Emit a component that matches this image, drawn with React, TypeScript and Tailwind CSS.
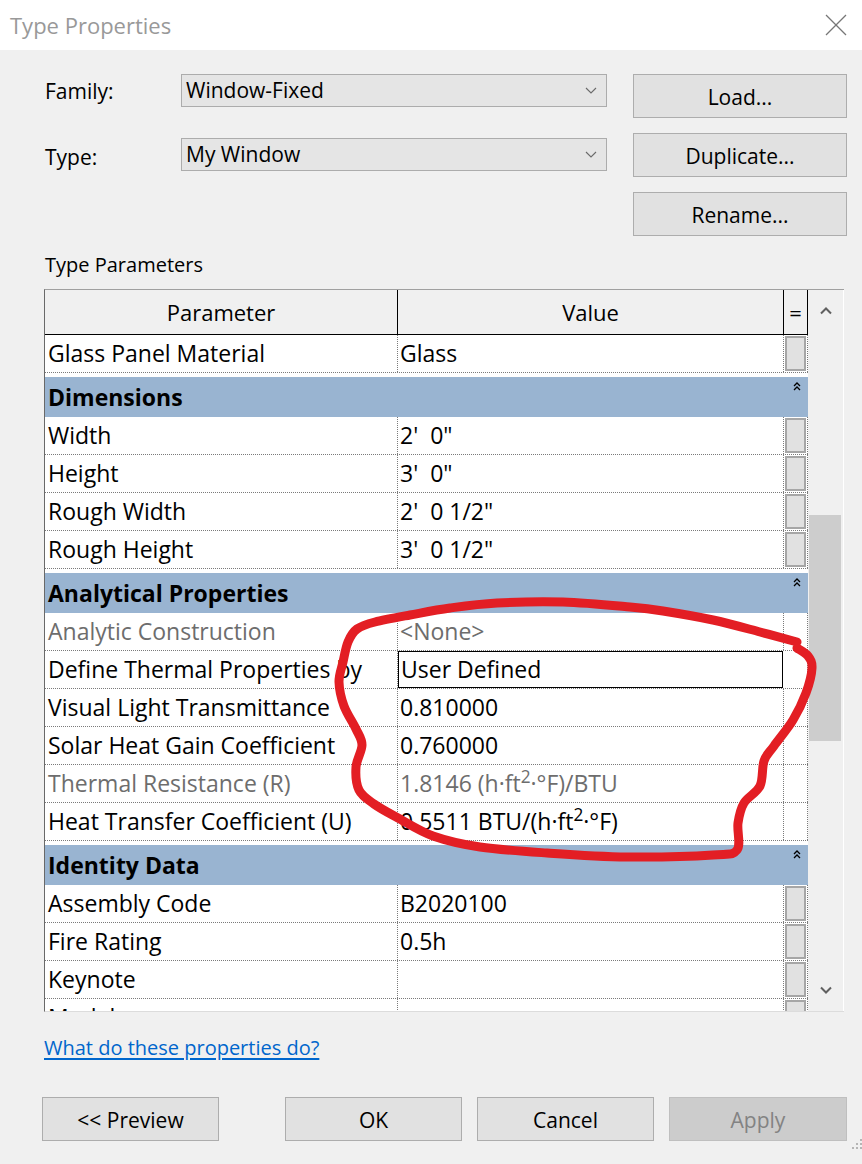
import type { ReactNode } from 'react';

type Row =
  | { kind: 'section'; name: string }
  | { kind: 'row'; name: string; value?: ReactNode; gray?: boolean; btn?: boolean; boxed?: boolean };

const ROWS: Row[] = [
  { kind: 'row', name: 'Glass Panel Material', value: 'Glass', btn: true },
  { kind: 'section', name: 'Dimensions' },
  { kind: 'row', name: 'Width', value: `2'  0"`, btn: true },
  { kind: 'row', name: 'Height', value: `3'  0"`, btn: true },
  { kind: 'row', name: 'Rough Width', value: `2'  0 1/2"`, btn: true },
  { kind: 'row', name: 'Rough Height', value: `3'  0 1/2"`, btn: true },
  { kind: 'section', name: 'Analytical Properties' },
  { kind: 'row', name: 'Analytic Construction', value: '<None>', gray: true },
  { kind: 'row', name: 'Define Thermal Properties by', value: 'User Defined', boxed: true },
  { kind: 'row', name: 'Visual Light Transmittance', value: '0.810000' },
  { kind: 'row', name: 'Solar Heat Gain Coefficient', value: '0.760000' },
  {
    kind: 'row',
    name: 'Thermal Resistance (R)',
    gray: true,
    value: (
      <>
        1.8146 (h·ft<sup>2</sup>·°F)/BTU
      </>
    ),
  },
  {
    kind: 'row',
    name: 'Heat Transfer Coefficient (U)',
    value: (
      <>
        0.5511 BTU/(h·ft<sup>2</sup>·°F)
      </>
    ),
  },
  { kind: 'section', name: 'Identity Data' },
  { kind: 'row', name: 'Assembly Code', value: 'B2020100', btn: true },
  { kind: 'row', name: 'Fire Rating', value: '0.5h', btn: true },
  { kind: 'row', name: 'Keynote', value: '', btn: true },
  { kind: 'row', name: 'Model', value: '', btn: true },
];

// hand-drawn red loop, points traced off the screenshot
const LOOP: [number, number][] = [
  [797, 642], [760, 632], [713, 620], [663, 611], [630, 607], [563, 602], [497, 603], [450, 608],
  [410, 615], [375, 622], [357, 629], [348, 642], [343, 662], [339, 682], [344, 706], [356, 729],
  [362, 745], [356, 767], [359, 790], [374, 804], [398, 818], [433, 836], [480, 847], [547, 853],
  [627, 857], [713, 855], [737, 850], [738, 823], [744, 803], [760, 786], [764, 761], [774, 746],
  [793, 720], [806, 693], [812, 668], [808, 656], [797, 648],
];

function smoothPath(pts: [number, number][]) {
  let d = `M${pts[0][0]},${pts[0][1]}`;
  for (let i = 0; i < pts.length - 1; i++) {
    const p0 = pts[i - 1] ?? pts[i];
    const p1 = pts[i];
    const p2 = pts[i + 1];
    const p3 = pts[i + 2] ?? p2;
    const c1 = [p1[0] + (p2[0] - p0[0]) / 6, p1[1] + (p2[1] - p0[1]) / 6];
    const c2 = [p2[0] - (p3[0] - p1[0]) / 6, p2[1] - (p3[1] - p1[1]) / 6];
    d += ` C${c1[0].toFixed(1)},${c1[1].toFixed(1)} ${c2[0].toFixed(1)},${c2[1].toFixed(1)} ${p2[0]},${p2[1]}`;
  }
  return d;
}

function Chevron({ up }: { up?: boolean }) {
  return (
    <svg width="12" height="8" viewBox="0 0 12 8">
      <polyline
        points={up ? '1,6.5 6,1.5 11,6.5' : '1,1.5 6,6.5 11,1.5'}
        fill="none"
        stroke="#606060"
        strokeWidth="2"
      />
    </svg>
  );
}

function Collapse() {
  return (
    <svg width="8" height="9" viewBox="0 0 8 9" className="mt-[5px] mr-[7px]">
      <polyline points="1,4 4,1 7,4" fill="none" stroke="#000" strokeWidth="1.3" />
      <polyline points="1,8 4,5 7,8" fill="none" stroke="#000" strokeWidth="1.3" />
    </svg>
  );
}

function Btn({ children, disabled }: { children: ReactNode; disabled?: boolean }) {
  return (
    <div
      className={`h-[44px] pt-[3px] flex items-center justify-center border text-[21px] ${
        disabled ? 'bg-[#cccccc] border-[#bfbfbf] text-[#838383]' : 'bg-[#e1e1e1] border-[#adadad] text-black'
      }`}
    >
      {children}
    </div>
  );
}

function Combo({ text }: { text: string }) {
  return (
    <div className="w-[426px] h-[33px] bg-[#e5e5e5] border border-[#acacac] flex items-center justify-between pl-[4px] pr-[9px] text-[21px] text-black">
      <span>{text}</span>
      <svg width="12" height="7" viewBox="0 0 12 7">
        <polyline points="1,1 6,6 11,1" fill="none" stroke="#6a6a6a" strokeWidth="1.1" />
      </svg>
    </div>
  );
}

function TableRow({ row }: { row: Row }) {
  if (row.kind === 'section') {
    return (
      <div className="h-[44px] pt-[4px] bg-white shrink-0">
        <div className="h-[40px] bg-[#99b4d1] flex justify-between">
          <span className="pl-[3px] leading-[40px] font-bold text-[23px] text-black">{row.name}</span>
          <Collapse />
        </div>
      </div>
    );
  }
  const tone = row.gray ? 'text-[#6d6d6d]' : 'text-black';
  return (
    <div className="h-[38px] shrink-0 bg-white grid grid-cols-[353px_386px_24px] border-b border-dotted border-[#7a7a7a] text-[23px]">
      <div className={`border-r border-dotted border-[#7a7a7a] pl-[3px] leading-[37px] whitespace-nowrap ${tone}`}>
        {row.name}
      </div>
      <div
        className={`pl-[2px] whitespace-pre ${tone} ${
          row.boxed ? 'border border-black leading-[35px] mr-px' : 'border-r border-dotted border-[#7a7a7a] leading-[37px]'
        }`}
      >
        {row.value}
      </div>
      <div className="border-r border-dotted border-[#7a7a7a] p-px">
        {row.btn && <div className="h-full bg-[#e1e1e1] border-2 border-[#a6a6a6]" />}
      </div>
    </div>
  );
}

export default function App() {
  return (
    <div className="relative w-[862px] h-[1164px] bg-[#f0f0f0] overflow-hidden font-['Open_Sans',sans-serif] flex flex-col">
      {/* title bar */}
      <div className="h-[50px] shrink-0 bg-white flex items-center justify-between pl-[10px] pr-[15px]">
        <span className="text-[22px] text-[#999999]">Type Properties</span>
        <svg width="22" height="22" viewBox="0 0 22 22">
          <line x1="1" y1="1" x2="21" y2="21" stroke="#777" strokeWidth="1.3" />
          <line x1="21" y1="1" x2="1" y2="21" stroke="#777" strokeWidth="1.3" />
        </svg>
      </div>

      {/* family / type + buttons */}
      <div className="flex pl-[45px]">
        <div className="w-[562px] pt-[23px] flex flex-col gap-[29px]">
          <div className="flex items-center">
            <span className="w-[136px] pt-[3px] text-[21px] text-black">Family:</span>
            <Combo text="Window-Fixed" />
          </div>
          <div className="flex items-center">
            <span className="w-[136px] pt-[5px] text-[21px] text-black">Type:</span>
            <Combo text="My Window" />
          </div>
        </div>
        <div className="ml-[26px] w-[214px] pt-[24px] flex flex-col gap-[15px]">
          <Btn>Load...</Btn>
          <Btn>Duplicate...</Btn>
          <Btn>Rename...</Btn>
        </div>
      </div>

      <div className="ml-[45px] mt-[15px] h-[28px] leading-[28px] text-[20px] text-black">Type Parameters</div>

      {/* parameter grid */}
      <div className="ml-[44px] mt-[10px] w-[800px] h-[723px] border-l border-t border-b border-l-[#696969] border-t-[#a0a0a0] border-b-[#dcdcdc] flex">
        <div className="w-[763px] flex flex-col overflow-hidden">
          <div className="h-[45px] shrink-0 bg-[#f0f0f0] grid grid-cols-[353px_386px_24px] border-b border-black text-[22px] text-black">
            <div className="border-r border-black flex items-center justify-center">Parameter</div>
            <div className="border-r border-black flex items-center justify-center">Value</div>
            <div className="border-r border-black flex items-center justify-center">=</div>
          </div>
          {ROWS.map((r) => (
            <TableRow key={r.name} row={r} />
          ))}
        </div>
        <div className="w-[36px] bg-[#f0f0f0] border-r border-white flex flex-col items-center">
          <div className="h-[42px] flex items-center justify-center">
            <Chevron up />
          </div>
          <div className="flex-1 w-full">
            <div className="mt-[183px] ml-[1px] w-[32px] h-[226px] bg-[#cdcdcd]" />
          </div>
          <div className="h-[42px] flex items-center justify-center">
            <Chevron />
          </div>
        </div>
      </div>

      <div className="ml-[44px] mt-[22px] h-[28px] leading-[28px] text-[20px] text-[#0066cc] underline underline-offset-[3px]">
        What do these properties do?
      </div>

      {/* dialog buttons */}
      <div className="mt-[35px] ml-[42px] flex">
        <div className="w-[177px]">
          <Btn>&lt;&lt; Preview</Btn>
        </div>
        <div className="w-[177px] ml-[66px]">
          <Btn>OK</Btn>
        </div>
        <div className="w-[177px] ml-[15px]">
          <Btn>Cancel</Btn>
        </div>
        <div className="w-[178px] ml-[15px]">
          <Btn disabled>Apply</Btn>
        </div>
      </div>

      {/* size grip */}
      <svg className="absolute right-0 bottom-[12px]" width="10" height="14" viewBox="0 0 10 14">
        {[
          [8, 1], [8, 5], [4, 5], [8, 9], [4, 9], [0, 9],
        ].map(([x, y]) => (
          <rect key={`${x}-${y}`} x={x} y={y} width="2" height="2" fill="#b5b5b5" />
        ))}
      </svg>

      {/* red marker annotation over the screenshot */}
      <svg className="absolute inset-0 pointer-events-none" width="862" height="1164" viewBox="0 0 862 1164">
        <path
          d={smoothPath(LOOP)}
          fill="none"
          stroke="#e31e24"
          strokeWidth="9"
          strokeLinecap="round"
          strokeLinejoin="round"
        />
      </svg>
    </div>
  );
}
